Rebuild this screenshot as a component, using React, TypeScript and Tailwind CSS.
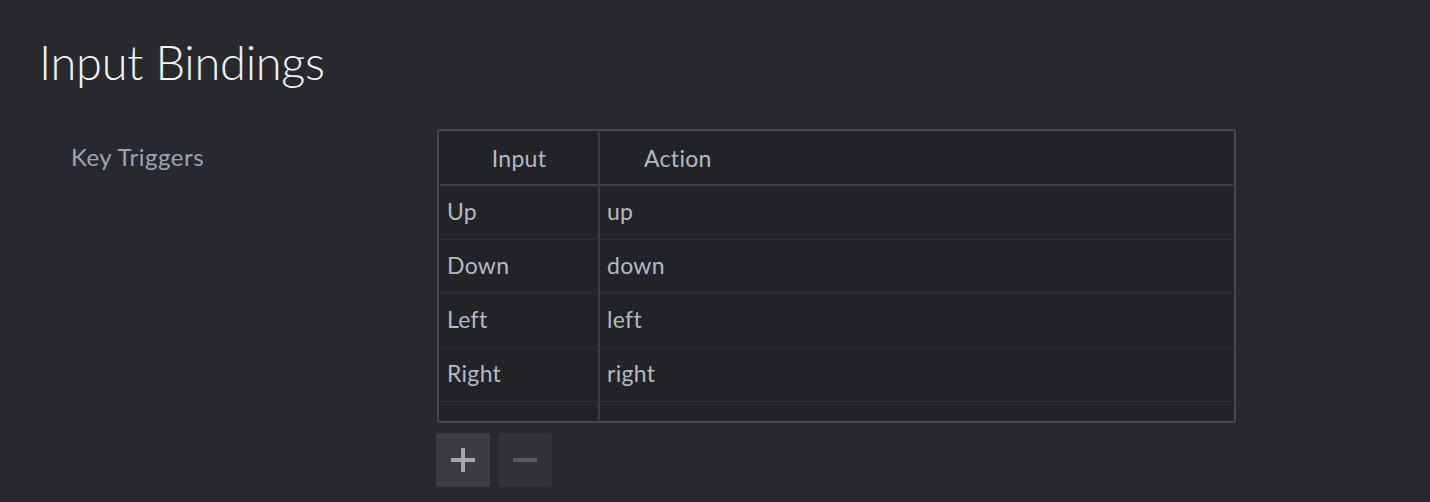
import React from "react";

const rows = [
  { input: "Up", action: "up" },
  { input: "Down", action: "down" },
  { input: "Left", action: "left" },
  { input: "Right", action: "right" },
];

// Key binding table with add / remove buttons
const BindingsTable: React.FC = () => {
  return (
    <div>
      <div className="w-[799px] h-[294px] border-2 border-[#45484d] rounded-[3px] bg-[#212327] p-px">
        <div className="flex h-[54px] border-b-2 border-[#3c3f44]">
          <div className="w-[160px] border-r-2 border-[#3a3d42] flex items-center justify-center text-[23px] tracking-[0.3px] text-[#b3bac3]">
            Input
          </div>
          <div className="flex-1 flex items-center pl-[44px] text-[23px] tracking-[0.3px] text-[#b3bac3]">
            Action
          </div>
        </div>
        {rows.map((r) => (
          <div key={r.input} className="flex h-[54px] border-b border-[#2d3034]">
            <div className="w-[160px] border-r-2 border-[#3a3d42] flex items-center pl-[7px] pb-[3px] text-[23px] tracking-[0.3px] text-[#b3bac3]">
              {r.input}
            </div>
            <div className="flex-1 flex items-center pl-[7px] pb-[3px] text-[23px] tracking-[0.3px] text-[#b3bac3]">
              {r.action}
            </div>
          </div>
        ))}
        <div className="flex h-[18px]">
          <div className="w-[160px] border-r-2 border-[#3a3d42]" />
        </div>
      </div>
      <div className="flex gap-2 mt-[10px] -ml-[1px]">
        <button className="w-[54px] h-[54px] rounded-[3px] bg-[#3a3c41] flex items-center justify-center">
          <svg width="26" height="26" viewBox="0 0 26 26">
            <rect x="11" y="1" width="4" height="24" fill="#a3a6ab" />
            <rect x="1" y="11" width="24" height="4" fill="#a3a6ab" />
          </svg>
        </button>
        <button className="w-[54px] h-[54px] rounded-[3px] bg-[#303236] flex items-center justify-center">
          <svg width="26" height="26" viewBox="0 0 26 26">
            <rect x="1" y="11" width="24" height="4" fill="#575a5f" />
          </svg>
        </button>
      </div>
    </div>
  );
};

function App() {
  return (
    <div
      className="min-h-screen w-full bg-[#27292e] pt-[39px] pl-[39px]"
      style={{ fontFamily: "Lato, 'Noto Sans', sans-serif" }}
    >
      <h1 className="text-[47px] font-light text-[#f2f3f5] leading-none tracking-[-0.3px]">
        Input Bindings
      </h1>
      <div className="flex mt-[43px]">
        <div className="w-[398px] pl-[32px] pt-[10px] text-[24px] tracking-[0.5px] text-[#9ca5ae]">
          Key Triggers
        </div>
        <BindingsTable />
      </div>
    </div>
  );
}

export default App;
